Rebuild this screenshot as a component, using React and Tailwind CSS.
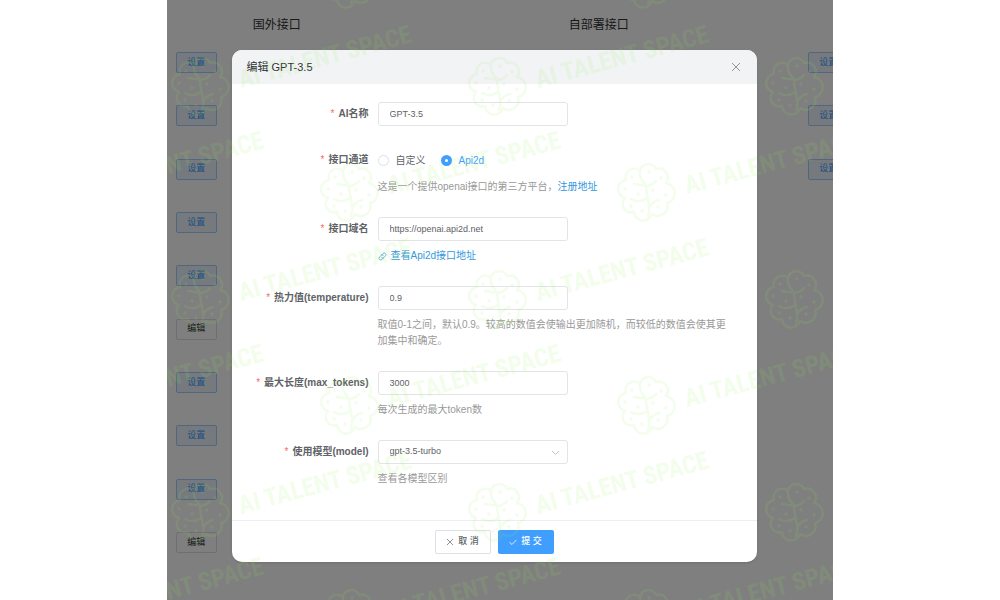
import React, { useState } from 'react';

const columns = [
  { title: '', rows: ['设置', '设置', '设置', '设置', '设置', '编辑', '设置', '设置', '设置', '编辑'] },
  { title: '国外接口', rows: [] },
  { title: '自部署接口', rows: ['设置', '设置', '设置'] },
];

const models = ['gpt-3.5-turbo', 'gpt-3.5-turbo-16k', 'gpt-4'];

function Mark({ x, y }) {
  return (
    <g transform={`translate(${x} ${y})`}>
      <g fill="none" stroke="#90f050" strokeWidth="2.4" strokeLinecap="round" strokeLinejoin="round">
        <path d="M-6-21A8.500 8.500 0 0 1 10-23A9 9 0 0 1 20-9A10.200 10.200 0 0 1 21 11A9.800 9.800 0 0 1 6 22A9.200 9.200 0 0 1-12 20A8.600 8.600 0 0 1-21 6A9.200 9.200 0 0 1-20-12A8.600 8.600 0 0 1-6-21Z" />
        <path d="M-6-21C-7-15-4-11-1-8M2 24C6 17 0 4 0-6C3-6 8-8 10-11M-1-7C-4-6-8-8-12-8M1 6C-3 9-8 11-15 7M3 16C5 11 9 9 13 8" />
      </g>
      <g fill="#90f050">
        <circle cx="3" cy="-20" r="1.7" />
        <circle cx="15" cy="-14" r="1.7" />
        <circle cx="-14" cy="-15" r="1.7" />
        <circle cx="-21" cy="-3" r="1.7" />
        <circle cx="-8" cy="2" r="1.7" />
        <circle cx="7" cy="-2" r="1.7" />
        <circle cx="20" cy="3" r="1.7" />
        <circle cx="12" cy="15" r="1.7" />
        <circle cx="-4" cy="19" r="1.7" />
        <circle cx="-15" cy="14" r="1.7" />
      </g>
      <text
        transform="translate(41 2) rotate(-15)"
        className="font-['Liberation_Sans_Narrow','Roboto_Condensed','DejaVu_Sans_Condensed','Roboto',sans-serif] text-[25px] font-bold"
        fill="#90f050"
      >
        AI TALENT SPACE
      </text>
    </g>
  );
}

function Watermark() {
  return (
    <svg className="pointer-events-none absolute inset-0 z-20 h-full w-full opacity-[0.11]" aria-hidden="true">
      <defs>
        {/* second row is shifted by half a tile, so it is repeated across the tile edges */}
        <pattern id="mark" width="297" height="213" patternUnits="userSpaceOnUse">
          <Mark x={33} y={86} />
          <Mark x={182} y={192} />
          <Mark x={182} y={-21} />
          <Mark x={-115} y={192} />
          <Mark x={-115} y={-21} />
        </pattern>
      </defs>
      <rect width="100%" height="100%" fill="url(#mark)" />
    </svg>
  );
}

function RowButton({ label }) {
  const style =
    label === '设置'
      ? 'border-[#a0cfff] bg-[#ecf5ff] text-[#409eff]'
      : 'border-[#dcdfe6] bg-white text-[#303133]';
  return (
    <button type="button" className={`h-[21px] w-[41px] shrink-0 rounded-xs border text-[9px] ${style}`}>
      {label}
    </button>
  );
}

function Column({ title, rows }) {
  return (
    <section className={`shrink-0 ${title ? 'w-[316px]' : 'w-[76px]'}`}>
      <h2 className="h-9 pl-[10px] pt-4 text-[12px] leading-[18px]">{title}</h2>
      <div className="grid h-[533px] grid-rows-10">
        {rows.map((label, i) => (
          <div key={i} className="flex items-center justify-end pr-[26px]">
            <RowButton label={label} />
          </div>
        ))}
      </div>
    </section>
  );
}

function Field({ id, label, children }) {
  return (
    <div className="flex gap-[9px]">
      <label
        htmlFor={id}
        className="w-[137px] shrink-0 text-right text-[10px] font-bold leading-6 text-[#606266]"
      >
        <span className="mr-1 font-normal text-[#f56c6c]">*</span>
        {label}
      </label>
      <div className="min-w-0 flex-1">{children}</div>
    </div>
  );
}

function Radio({ label, ...props }) {
  return (
    <label className="flex items-center gap-[7px] text-[10px] text-[#606266] has-checked:text-[#409eff]">
      <input
        type="radio"
        name="channel"
        className="size-[11px] appearance-none rounded-full border border-[#dcdfe6] bg-white checked:border-4 checked:border-[#409eff]"
        {...props}
      />
      {label}
    </label>
  );
}

const inputClass =
  'block h-6 w-[190px] rounded-[3px] border border-[#e2e4e8] bg-white px-[11px] text-[9px] text-[#606266] outline-none';
const hintClass = 'mt-[7px] text-[10px] leading-4 text-[#999]';

function App() {
  const [channel, setChannel] = useState('api2d');
  const [form, setForm] = useState({
    name: 'GPT-3.5',
    host: 'https://openai.api2d.net',
    temperature: '0.9',
    tokens: '3000',
    model: 'gpt-3.5-turbo',
  });

  const bind = (key) => ({
    id: key,
    value: form[key],
    onChange: (e) => setForm({ ...form, [key]: e.target.value }),
  });

  return (
    <div className="min-h-screen bg-white font-['Liberation_Sans','Noto_Sans_CJK_SC',sans-serif]">
      <div className="relative mx-auto h-screen w-2/3 overflow-hidden">
        <div className="flex text-[#303133]">
          {columns.map((col) => (
            <Column key={col.title} {...col} />
          ))}
        </div>

        <div className="absolute inset-0 z-10 flex items-start justify-center bg-black/50 pr-3 pt-[50px]">
          <div
            role="dialog"
            aria-labelledby="dialog-title"
            className="w-[525px] overflow-hidden rounded-[10px] bg-white shadow-sm"
          >
            <header className="flex h-[34px] items-center justify-between bg-[#f2f3f5] pl-[15px] pr-4">
              <h1 id="dialog-title" className="text-[11px] text-[#303133]">
                编辑 GPT-3.5
              </h1>
              <button type="button" aria-label="关闭">
                <svg width="10" height="10" viewBox="0 0 10 10" stroke="#909399">
                  <path d="M1 1l8 8M9 1l-8 8" />
                </svg>
              </button>
            </header>

            <form onSubmit={(e) => e.preventDefault()}>
              <div className="flex flex-col gap-[22px] pb-[33px] pr-[26px] pt-[18px]">
                <Field id="name" label="AI名称">
                  <input type="text" className={inputClass} {...bind('name')} />
                </Field>

                <Field id="custom" label="接口通道">
                  <div className="flex h-6 items-center gap-[15px]">
                    <Radio
                      id="custom"
                      label="自定义"
                      checked={channel === 'custom'}
                      onChange={() => setChannel('custom')}
                    />
                    <Radio
                      id="api2d"
                      label="Api2d"
                      checked={channel === 'api2d'}
                      onChange={() => setChannel('api2d')}
                    />
                  </div>
                  <p className={hintClass}>
                    这是一个提供openai接口的第三方平台，
                    <a href="#register" className="text-[#3498db]">
                      注册地址
                    </a>
                  </p>
                </Field>

                <Field id="host" label="接口域名">
                  <input type="text" className={inputClass} {...bind('host')} />
                  <p className={hintClass}>
                    <a href="#docs" className="flex items-center gap-1 text-[#3498db]">
                      <svg width="9" height="9" viewBox="0 0 10 10" fill="none" stroke="currentColor" strokeWidth="0.8" strokeLinecap="round">
                        <path d="M4.200 3.200l1.300-1.500a1.900 1.900 0 0 1 2.800 2.700L6.600 6.200a1.900 1.900 0 0 1-2.500.2M5.800 6.800L4.500 8.300a1.900 1.900 0 0 1-2.800-2.700l1.700-1.800a1.900 1.900 0 0 1 2.500-.2" />
                      </svg>
                      查看Api2d接口地址
                    </a>
                  </p>
                </Field>

                <Field id="temperature" label="热力值(temperature)">
                  <input type="text" className={inputClass} {...bind('temperature')} />
                  <p className={hintClass}>
                    取值0-1之间，默认0.9。较高的数值会使输出更加随机，而较低的数值会使其更加集中和确定。
                  </p>
                </Field>

                <Field id="tokens" label="最大长度(max_tokens)">
                  <input type="text" className={inputClass} {...bind('tokens')} />
                  <p className={hintClass}>每次生成的最大token数</p>
                </Field>

                <Field id="model" label="使用模型(model)">
                  <div className="relative w-[190px]">
                    <select className={`${inputClass} appearance-none`} {...bind('model')}>
                      {models.map((m) => (
                        <option key={m}>{m}</option>
                      ))}
                    </select>
                    <svg
                      className="pointer-events-none absolute right-2 top-2"
                      width="9"
                      height="9"
                      viewBox="0 0 9 9"
                      fill="none"
                      stroke="#c0c4cc"
                    >
                      <path d="M1 3l3.500 3.500L8 3" />
                    </svg>
                  </div>
                  <p className={hintClass}>查看各模型区别</p>
                </Field>
              </div>

              <footer className="flex h-[42px] items-center justify-center gap-[7px] border-t border-[#ebeef5] text-[9px]">
                <button
                  type="button"
                  className="flex h-6 w-14 items-center justify-center gap-1 rounded-xs border border-[#dcdfe6] bg-white font-medium text-[#606266]"
                >
                  <svg width="8" height="8" viewBox="0 0 8 8" stroke="currentColor" strokeWidth="0.7">
                    <path d="M1 1l6 6M7 1l-6 6" />
                  </svg>
                  取 消
                </button>
                <button
                  type="submit"
                  className="flex h-6 w-14 items-center justify-center gap-1 rounded-xs bg-[#409eff] font-medium text-white"
                >
                  <svg width="8" height="8" viewBox="0 0 8 8" fill="none" stroke="currentColor" strokeWidth="0.8">
                    <path d="M0.500 4.200L3 6.500L7.500 1.800" />
                  </svg>
                  提 交
                </button>
              </footer>
            </form>
          </div>
        </div>

        <Watermark />
      </div>
    </div>
  );
}

export default App;
